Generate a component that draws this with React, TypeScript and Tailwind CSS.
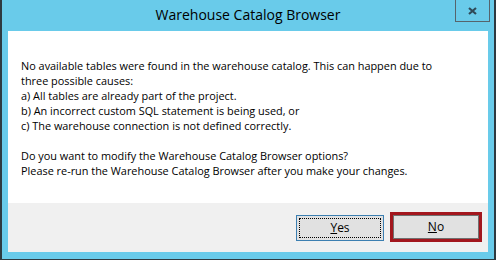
import React from 'react';

const font = { fontFamily: '"Open Sans", "Noto Sans", sans-serif' };

export default function App() {
    return (
        <div className="w-[496px] h-[260px] bg-[#69cbea] border-l-2 border-r-2 border-b border-[#2e3a40] flex flex-col" style={font}>
            {/* Title bar */}
            <div className="h-[31px] relative flex items-center justify-center">
                <span className="text-[14px] text-black leading-none mt-[-1px]">Warehouse Catalog Browser</span>
                <button className="absolute top-0 right-[4px] w-[35px] h-[22px] border border-t-0 border-[#56646c] flex items-center justify-center">
                    <svg width="9" height="8" viewBox="0 0 9 8">
                        <path d="M1 1 L8 7 M8 1 L1 7" stroke="#2f4a58" strokeWidth="2.2" />
                    </svg>
                </button>
            </div>

            {/* Dialog body */}
            <div className="flex-1 mx-[6px] mb-[7px] flex flex-col">
                <div className="flex-1 bg-white pl-[13px] pt-[27px] text-[10.9px] leading-[15px] text-black">
                    <p>No available tables were found in the warehouse catalog. This can happen due to</p>
                    <p>three possible causes:</p>
                    <p>a) All tables are already part of the project.</p>
                    <p>b) An incorrect custom SQL statement is being used, or</p>
                    <p>c) The warehouse connection is not defined correctly.</p>
                    <p>&nbsp;</p>
                    <p>Do you want to modify the Warehouse Catalog Browser options?</p>
                    <p>Please re-run the Warehouse Catalog Browser after you make your changes.</p>
                </div>
                <div className="h-[49px] bg-[#f0f0f0] flex items-start justify-end pr-[6px] gap-[6px]">
                    <button className="mt-[12px] w-[88px] h-[26px] border border-[#3c7fb1] bg-[#e1e1e1] p-[2px]">
                        <div className="w-full h-full border border-dotted border-black flex items-center justify-center text-[12px] text-black">
                            <span><span className="underline">Y</span>es</span>
                        </div>
                    </button>
                    <div className="mt-[9px] w-[92px] h-[30px] border-[3px] border-[#a3161d]">
                        <button className="w-full h-full border border-[#707070] bg-[#e1e1e1] flex items-center justify-center text-[12px] text-black">
                            <span><span className="underline">N</span>o</span>
                        </button>
                    </div>
                </div>
            </div>
        </div>
    );
}
